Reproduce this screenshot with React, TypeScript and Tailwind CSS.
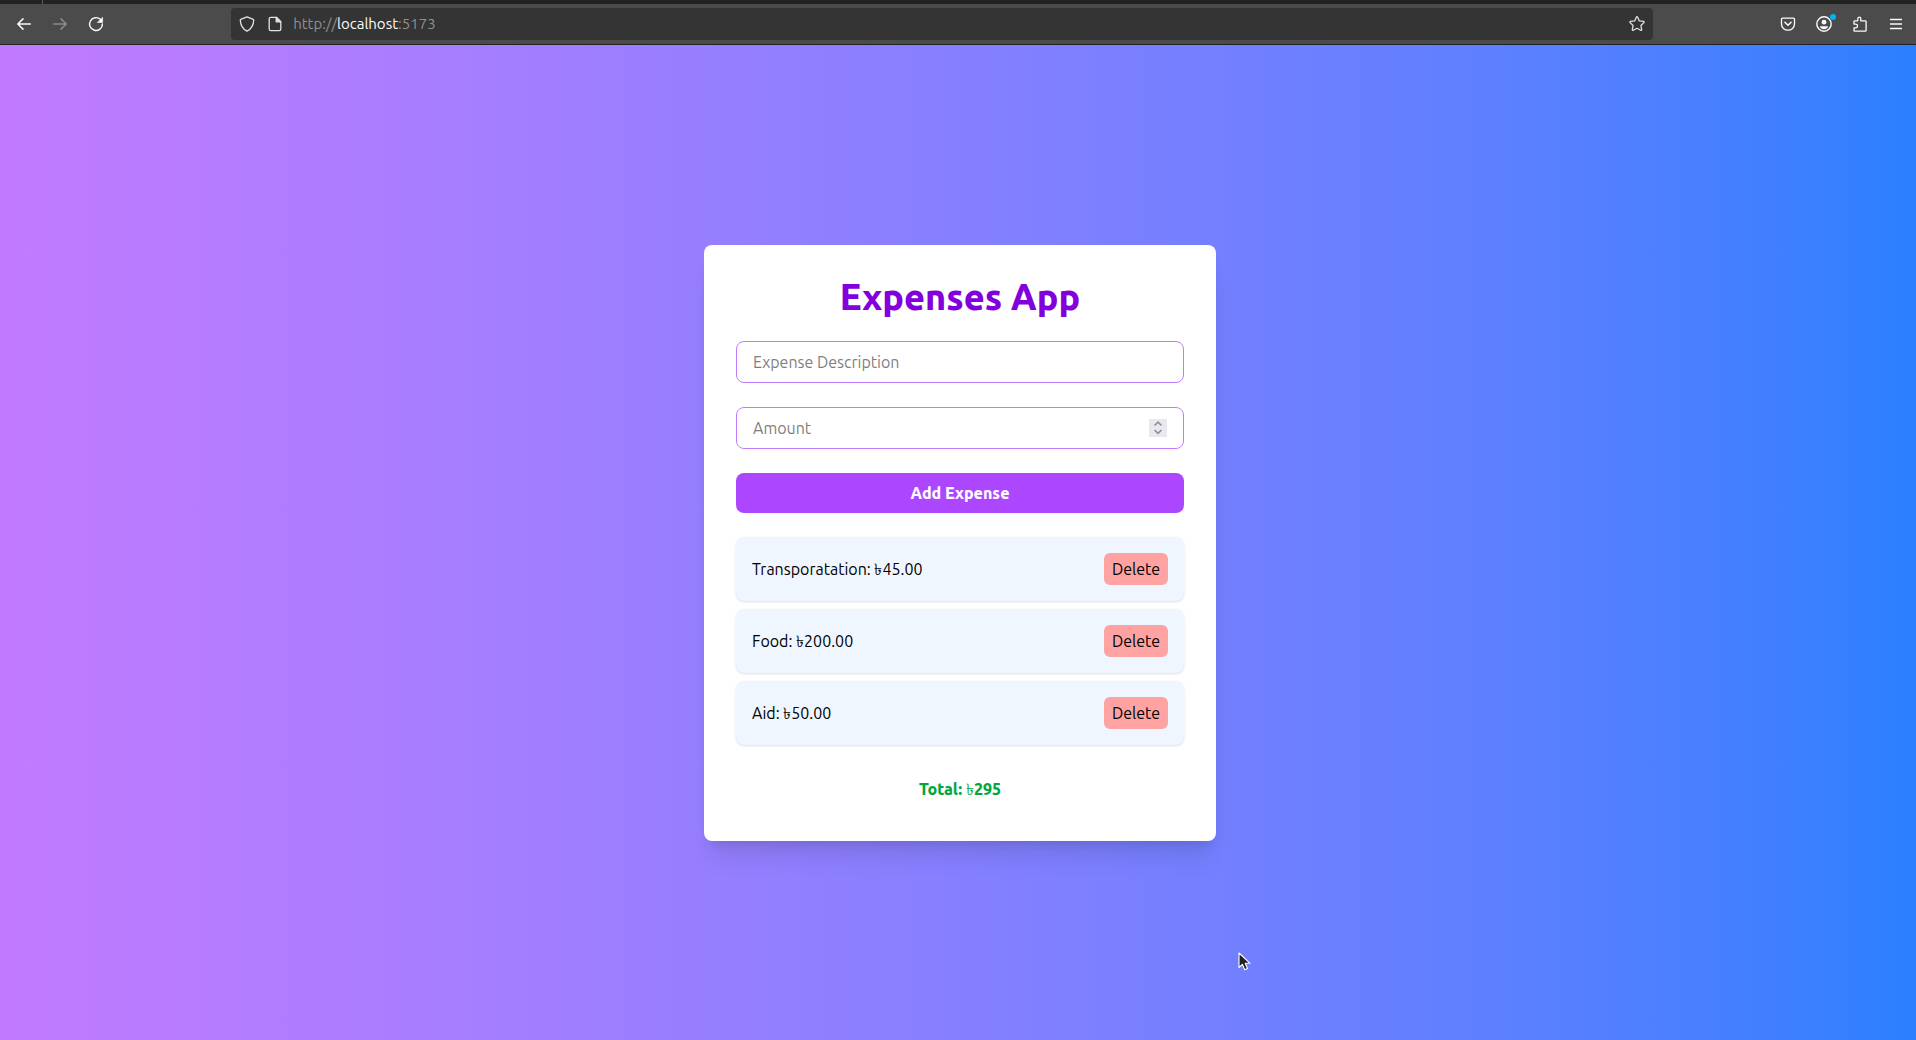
import type { ReactNode } from "react";

type Expense = { id: number; name: string; amount: number };

const expenses: Expense[] = [
  { id: 1, name: "Transporatation", amount: 45 },
  { id: 2, name: "Food", amount: 200 },
  { id: 3, name: "Aid", amount: 50 },
];

function Icon({ children, className = "" }: { children: ReactNode; className?: string }) {
  return (
    <svg
      viewBox="0 0 16 16"
      className={`size-4 shrink-0 ${className}`}
      fill="none"
      stroke="currentColor"
      strokeWidth="1.3"
      strokeLinecap="round"
      strokeLinejoin="round"
      aria-hidden="true"
    >
      {children}
    </svg>
  );
}

function ToolbarButton({ label, disabled, children }: { label: string; disabled?: boolean; children: ReactNode }) {
  return (
    <button
      type="button"
      aria-label={label}
      disabled={disabled}
      className="relative flex h-8 w-9 items-center justify-center text-[#fbfbfe] disabled:text-[#8b8b8b]"
    >
      {children}
    </button>
  );
}

function BrowserToolbar() {
  return (
    <header className="shrink-0 border-b border-[#222222] bg-[#4b4b4b]">
      <div className="flex h-1 bg-[#222222]">
        <div className="h-1 w-[43px] border-r border-[#5a5a5a]" />
      </div>
      <div className="flex h-10 items-center pr-0.5 pl-1.5">
        <ToolbarButton label="Back">
          <Icon>
            <path d="M14.3 8H1.9M7 2.9 1.8 8 7 13.1" strokeWidth="1.5" />
          </Icon>
        </ToolbarButton>
        <ToolbarButton label="Forward" disabled>
          <Icon>
            <path d="M1.7 8h12.4M9 2.9 14.2 8 9 13.1" strokeWidth="1.5" />
          </Icon>
        </ToolbarButton>
        <ToolbarButton label="Reload">
          <Icon>
            <path d="M12.6 3.6A6.4 6.4 0 1 0 14.4 8" strokeWidth="1.4" />
            <path d="M14.6 1.5v5H9.6z" fill="currentColor" strokeWidth="0.6" />
          </Icon>
        </ToolbarButton>
        <div className="flex-1" />
        <div className="flex h-8 flex-12 items-center rounded bg-[#343434] px-2 text-[#e2e2e4]">
          <Icon>
            <path d="M8 .8 14.3 3.4c.3.1.4.3.4.6C14.6 9 12.2 13 8 15.2 3.8 13 1.4 9 1.3 4c0-.3.1-.5.4-.6z" />
          </Icon>
          <Icon className="ml-3">
            <path d="M9.4 1.3H3.8c-.9 0-1.6.7-1.6 1.6v10.2c0 .9.7 1.6 1.6 1.6h8.4c.9 0 1.6-.7 1.6-1.6V5.6z" />
            <path d="M9.2 1.4v4.4h4.4z" fill="currentColor" />
          </Icon>
          <p className="ml-2.5 flex-1 text-[15px] leading-5 text-[#8f8f8f]">
            http://<span className="text-[#fbfbfe]">localhost</span>:5173
          </p>
          <button type="button" aria-label="Bookmark this page">
            <Icon>
              <path d="M7.4 1.1c.2-.5 1-.5 1.2 0l1.7 3.8 4.2.5c.6.1.8.8.4 1.2l-3 2.9.8 4.1c.1.6-.5 1-1 .7L8 12.3l-3.7 2c-.5.3-1.1-.1-1-.7l.8-4.1-3-2.9c-.4-.4-.2-1.1.4-1.2l4.2-.5z" />
            </Icon>
          </button>
        </div>
        <div className="flex-1" />
        <ToolbarButton label="Save to Pocket">
          <Icon>
            <path d="M2.6 2.2h10.8c.6 0 1.1.5 1.1 1.1V8c0 3.5-2.9 6.2-6.5 6.2S1.5 11.5 1.5 8V3.3c0-.6.5-1.1 1.1-1.1z" />
            <path d="M4.9 6.3 8 9.2l3.1-2.9" strokeWidth="1.5" />
          </Icon>
        </ToolbarButton>
        <ToolbarButton label="Account">
          <Icon>
            <circle cx="8" cy="8" r="7.2" strokeWidth="1.4" />
            <circle cx="8" cy="6.2" r="2.4" fill="currentColor" stroke="none" />
            <path d="M3.9 10.2h8.2c-.3 1.8-2 3.1-4.1 3.1s-3.8-1.3-4.100-3.100z" fill="currentColor" stroke="none" />
          </Icon>
          <span className="absolute top-1.5 right-1.5 size-1.5 rounded-full bg-[#00b3f4]" />
        </ToolbarButton>
        <ToolbarButton label="Extensions">
          <Icon>
            <path d="M2 8V5.400c0-.3.300-.6.600-.6h3.200V2.700a1.500 1.500 0 0 1 3 0v2.100h4.600c.4 0 .7.300.7.700v9c0 .4-.3.700-.7.700H2.600c-.3 0-.6-.3-.6-.6v-2.800h1.700a1.700 1.700 0 0 0 0-3.600z" />
          </Icon>
        </ToolbarButton>
        <ToolbarButton label="Open application menu">
          <Icon>
            <path d="M2.5 3.500h11M2.500 8h11M2.500 12.500h11" />
          </Icon>
        </ToolbarButton>
      </div>
    </header>
  );
}

function ExpenseRow({ expense }: { expense: Expense }) {
  return (
    <li className="flex items-center justify-between rounded-lg bg-blue-50 p-4 shadow-sm">
      <span>
        {expense.name}: ৳{expense.amount.toFixed(2)}
      </span>
      <button type="button" className="w-16 rounded-md bg-red-300 py-1">
        Delete
      </button>
    </li>
  );
}

function ExpensesCard() {
  const total = expenses.reduce((sum, e) => sum + e.amount, 0);
  return (
    <section className="w-full max-w-lg rounded-lg bg-white px-8 pt-8 pb-10 shadow-xl">
      <h1 className="mb-6 text-center text-4xl font-extrabold text-purple-700">Expenses App</h1>
      <form className="flex flex-col gap-6" onSubmit={(e) => e.preventDefault()}>
        <input
          type="text"
          aria-label="Expense Description"
          placeholder="Expense Description"
          className="w-full rounded-lg border border-purple-400 px-4 py-2 placeholder:text-[#7f7f7f]"
        />
        <div className="flex items-center rounded-lg border border-purple-400 px-4 py-2">
          <input
            type="number"
            aria-label="Amount"
            placeholder="Amount"
            className="min-w-0 flex-1 [appearance:textfield] outline-none placeholder:text-[#7f7f7f]"
          />
          <svg viewBox="0 0 18 18" className="h-[18px] w-[18px] bg-[#e9e9ed]" fill="none" stroke="#8f8f9d" strokeWidth="1.7" aria-hidden="true">
            <path d="M5.5 6.500 9 3.200l3.500 3.300M5.500 11 9 14.300l3.500-3.300" />
          </svg>
        </div>
        <button type="submit" className="w-full rounded-lg bg-purple-500 py-2 font-extrabold text-white">
          Add Expense
        </button>
      </form>
      <ul className="mt-6 space-y-2">
        {expenses.map((expense) => (
          <ExpenseRow key={expense.id} expense={expense} />
        ))}
      </ul>
      <p className="mt-8 text-center font-extrabold text-green-600">
        Total: <span className="font-normal">৳</span>
        {total}
      </p>
    </section>
  );
}

function Pointer() {
  return (
    <svg viewBox="0 0 14 20" className="absolute top-[952px] left-[1238px] h-5 w-3.5" aria-hidden="true">
      <path d="M1 1v14.500l3.400-3.200 2.300 5.400 2.800-1.200-2.300-5.200h4.900z" fill="#222222" stroke="#ffffff" strokeWidth="1.1" strokeLinejoin="round" />
    </svg>
  );
}

export default function App() {
  return (
    <div className="relative flex min-h-screen flex-col font-['Ubuntu','Noto_Sans',sans-serif] text-base text-black">
      <BrowserToolbar />
      <main className="flex flex-1 items-center justify-center bg-linear-to-r from-purple-400 to-blue-500 pl-1">
        <ExpensesCard />
      </main>
      <Pointer />
    </div>
  );
}
